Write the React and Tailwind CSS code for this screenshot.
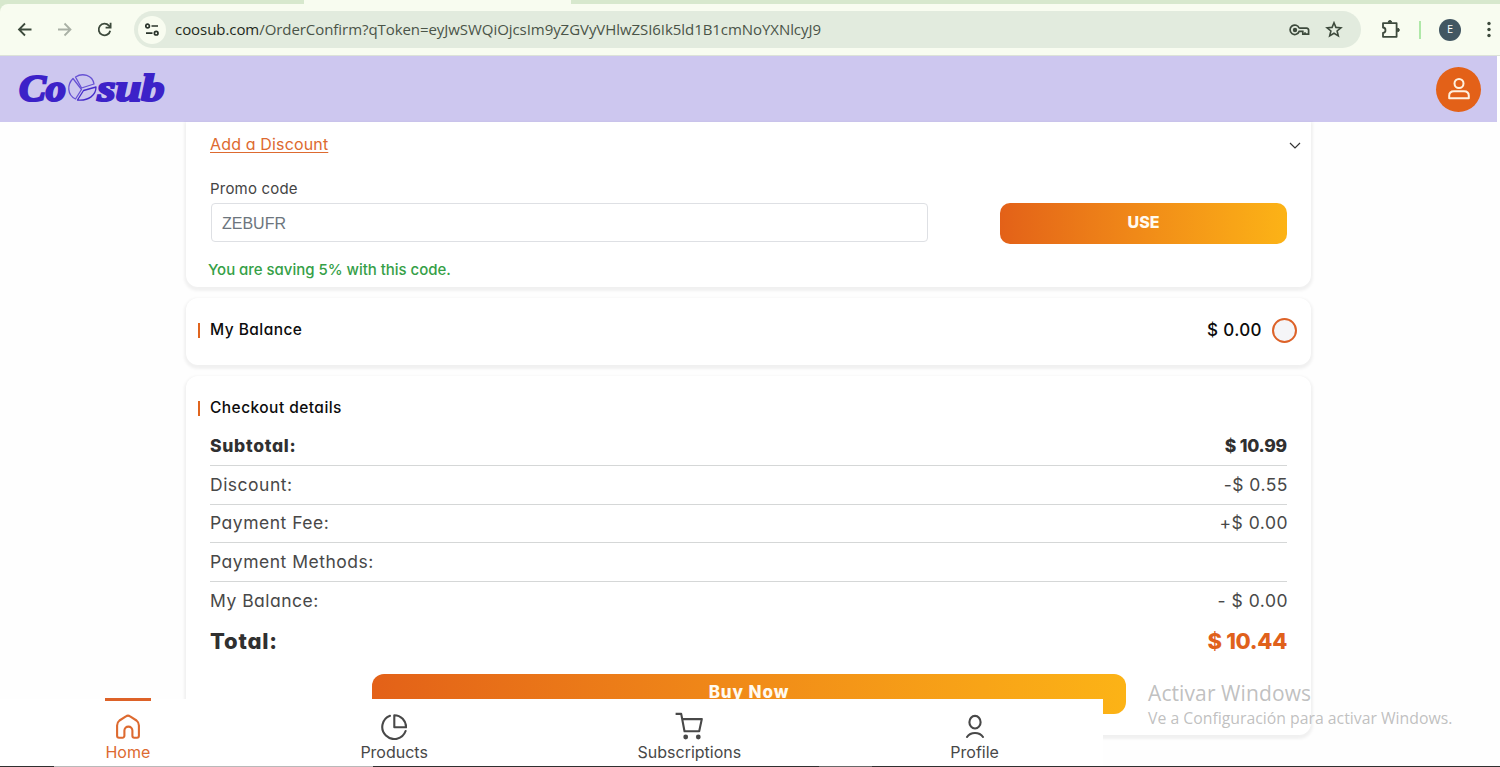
import React from "react";

const summaryRows = [
  { label: "Discount:", value: "-$ 0.55" },
  { label: "Payment Fee:", value: "+$ 0.00" },
  { label: "Payment Methods:", value: "" },
  { label: "My Balance:", value: "- $ 0.00" },
];

const HomeIcon = () => (
  <svg width="24" height="26" viewBox="0 0 24 26" fill="none" stroke="currentColor" strokeWidth="2.1" strokeLinejoin="round">
    <path d="M5.700 23.700H3A1.900 1.900 0 0 1 1.100 21.800V11.400c0-2.400.8-3.600 2.400-4.900l6.400-4.100a3.600 3.600 0 0 1 4.200 0l6.400 4.100c1.600 1.300 2.400 2.500 2.400 4.900v10.400a1.900 1.900 0 0 1-1.900 1.900h-2.700a1.900 1.900 0 0 1-1.900-1.900v-5.200a4 4 0 0 0-8 0v5.200a1.900 1.900 0 0 1-2.300 1.900z" />
  </svg>
);

const ProductsIcon = () => (
  <svg width="26" height="26" viewBox="0 0 26 26" fill="none" stroke="currentColor" strokeWidth="2.1" strokeLinecap="round">
    <path d="M9 1.800A12 12 0 1 0 24.600 17" />
    <path d="M13.300 1.200v12.100h11.800A12 12 0 0 0 13.300 1.200z" strokeLinejoin="round" />
  </svg>
);

const CartIcon = () => (
  <svg width="28" height="28" viewBox="0 0 28 28" fill="none" stroke="currentColor" strokeWidth="2.1" strokeLinejoin="round">
    <path d="M.6 1.900h5.600l3.300 17.400h14.700l2.600-12.200H7.200" />
    <circle cx="10.700" cy="25" r="2.400" fill="currentColor" stroke="none" />
    <circle cx="23.300" cy="25" r="2.400" fill="currentColor" stroke="none" />
  </svg>
);

const ProfileIcon = () => (
  <svg width="20" height="26" viewBox="0 0 20 26" fill="none" stroke="currentColor" strokeWidth="2.1" strokeLinecap="round">
    <ellipse cx="10" cy="8.200" rx="5.600" ry="6.300" />
    <path d="M2 23c3.600-5.300 12.400-5.300 16 0" />
  </svg>
);

const Logo = () => (
  <svg width="156" height="60" viewBox="0 0 156 60" fill="#3c22c8" fontFamily="'Liberation Serif', serif" fontWeight="700" fontStyle="italic" fontSize="38">
    <text x="1" y="41.800" textLength="47" lengthAdjust="spacingAndGlyphs" stroke="#3c22c8" strokeWidth="2.200">Co</text>
    <text x="79.500" y="41.800" textLength="67" lengthAdjust="spacingAndGlyphs" stroke="#3c22c8" strokeWidth="2.200">sub</text>
    <g fill="none" stroke="#6752d4" strokeWidth="1.300" strokeLinejoin="round">
      <path d="M55 19.500c-6 6-6 16.500 2.500 20.500l6-9.500z" />
      <path d="M57.500 18c7-4.500 17-2 18.500 7l-12.500 4z" />
      <path d="M65.500 31.500l12.500-3.500c0 8-7 14-18.500 13z" stroke="#452cca" />
    </g>
  </svg>
);

const BrowserBar = () => (
  <div className="h-14 shrink-0 bg-[#d7e8cd]">
    <div className="h-1 flex">
      <div className="ml-[304px] w-[267px] bg-[#f8fcf0]" />
    </div>
    <div className="h-[52px] flex items-center bg-[#f8fcf0] border-b border-[#dce2d8] rounded-tl-lg pl-[17px] text-[#3d4a3c]">
      <svg width="16" height="16" viewBox="0 0 16 16" fill="none" stroke="currentColor" strokeWidth="1.800">
        <path d="M14.500 7.500H2.500M8 1.500L2 7.500l6 6" />
      </svg>
      <svg className="ml-6 text-[#a9b0a5]" width="16" height="16" viewBox="0 0 16 16" fill="none" stroke="currentColor" strokeWidth="1.800">
        <path d="M1 7.500h12M7.500 1.500l6 6-6 6" />
      </svg>
      <svg className="ml-6" width="16" height="16" viewBox="0 0 16 16" fill="none" stroke="currentColor" strokeWidth="1.800">
        <path d="M13.200 8.700A5.800 5.800 0 1 1 11.900 3.700L13.400 5.500" />
        <path d="M13.600.7V5.700H8.600" />
      </svg>
      <div className="ml-[21px] w-[1227px] h-[37px] flex items-center rounded-full bg-[#e2ebde] pl-1">
        <div className="w-7 h-7 rounded-full bg-[#f8fcf0] flex items-center justify-center">
          <svg width="14" height="14" viewBox="0 0 14 14" fill="none" stroke="#29332a" strokeWidth="1.700">
            <circle cx="2.600" cy="3" r="1.800" />
            <path d="M6.500 3H13M1 10.200h6.500" />
            <circle cx="11.200" cy="10.200" r="1.800" />
          </svg>
        </div>
        <p className="ml-[9px] whitespace-nowrap text-[15px] tracking-[-0.06px] text-[#4a5448] font-['Open_Sans',sans-serif]">
          <span className="text-[#1f2a20]">coosub.com</span>
          /OrderConfirm?qToken=eyJwSWQiOjcsIm9yZGVyVHlwZSI6Ik5ld1B1cmNoYXNlcyJ9
        </p>
        <svg className="ml-auto" width="21" height="14" viewBox="0 0 21 14" fill="none" stroke="currentColor" strokeWidth="1.700">
          <path d="M10.200 5.200A4.700 4.700 0 1 0 10.200 8.400h3.600v2.700h2.200v-1.800M16 11.100h3.600V7.500a2 2 0 0 0-2-2.300H10.200" />
          <circle cx="6" cy="7" r="2.200" fill="currentColor" stroke="none" />
        </svg>
        <svg className="ml-[15px] mr-[18px]" width="18" height="18" viewBox="0 0 18 18" fill="none" stroke="currentColor" strokeWidth="1.600">
          <path d="M9 1.800l1.900 4.600 5 .4-3.800 3.200 1.200 4.900L9 12.300l-4.300 2.600 1.200-4.900-3.800-3.200 5-.4z" />
        </svg>
      </div>
      <svg className="ml-5" width="20" height="20" viewBox="0 0 20 20" fill="none" stroke="currentColor" strokeWidth="1.800" strokeLinejoin="round">
        <path d="M2 3.200h13.600v13.600H2v-4c3.300-.3 3.300-5 0-5.300z" />
        <path d="M7.200 2.200a1.700 1.700 0 0 1 3.400 0zM16.600 8.300a1.700 1.700 0 0 1 0 3.400z" fill="currentColor" strokeWidth="1" />
      </svg>
      <div className="ml-[18px] w-0.5 h-[18px] bg-[#afe8a8]" />
      <div className="ml-[18px] w-[22px] h-[22px] rounded-full bg-[#425762] text-white text-[11px] flex items-center justify-center font-['Open_Sans',sans-serif]">
        E
      </div>
      <svg className="ml-[25px]" width="6" height="18" viewBox="0 0 6 18" fill="currentColor">
        <circle cx="3" cy="2.500" r="1.700" />
        <circle cx="3" cy="8.500" r="1.700" />
        <circle cx="3" cy="14.500" r="1.700" />
      </svg>
    </div>
  </div>
);

const Header = () => (
  <header className="h-[66px] w-[1497px] shrink-0 flex items-center justify-between bg-[#cdc7ef] pl-[18px] pr-4">
    <Logo />
    <button className="w-[45px] h-[45px] rounded-full bg-[#e36118] flex items-center justify-center" aria-label="Account">
      <svg width="22" height="22" viewBox="0 0 22 22" fill="none" stroke="#fff1df" strokeWidth="2">
        <circle cx="11" cy="5.500" r="4.500" />
        <path d="M1.200 20.200v-2.500c0-3 2-4.500 4.800-4.500h10c2.800 0 4.800 1.500 4.800 4.500v2.500z" strokeLinejoin="round" />
      </svg>
    </button>
  </header>
);

const SectionTitle = ({ children }) => (
  <div className="flex items-center">
    <span className="w-0.5 h-[15px] bg-[#e0651f]" />
    <h2 className="ml-2.5 text-[15.5px] leading-[22px] font-medium tracking-[0.45px] text-[#0c0c0c]">{children}</h2>
  </div>
);

const DiscountCard = () => (
  <section className="h-[165px] rounded-b-xl bg-white px-6 shadow-[0_2px_3px_2px_rgba(0,0,0,0.055)]">
    <div className="h-11 flex items-center justify-between">
      <a className="text-base tracking-[0.15px] text-[#dd6a30] underline underline-offset-2">Add a Discount</a>
      <svg className="mr-[-14px] mt-1" width="12" height="8" viewBox="0 0 12 8" fill="none" stroke="#333" strokeWidth="1.200">
        <path d="M1 1l5 5 5-5" />
      </svg>
    </div>
    <label className="block mt-3 leading-[22px] text-[15px] tracking-[0.2px] text-[#444]">Promo code</label>
    <div className="mt-[3px] flex justify-between">
      <div className="ml-px w-[717px] h-[39px] flex items-center rounded border border-[#dee0e4] pl-2.5 pt-0.5 text-base text-[#6c757d] font-['Liberation_Sans',sans-serif]">
        ZEBUFR
      </div>
      <button className="w-[287px] h-[41px] rounded-[10px] bg-linear-to-r from-[#e36118] to-[#fcb316] pb-[3px] text-base font-extrabold text-[#fffaf0]">
        USE
      </button>
    </div>
    <p className="mt-[15px] -ml-0.5 leading-[22px] text-[15px] tracking-[-0.03px] font-medium text-[#35a047]">You are saving 5% with this code.</p>
  </section>
);

const BalanceCard = () => (
  <section className="mt-[11px] h-[67px] flex items-center justify-between rounded-xl bg-white pl-3 pr-3.5 pb-[3px] shadow-[0_2px_3px_2px_rgba(0,0,0,0.055)]">
    <SectionTitle>My Balance</SectionTitle>
    <div className="flex items-center">
      <span className="mt-0.5 text-[17px] font-medium tracking-[0.4px] text-[#0c0c0c]">$ 0.00</span>
      <span className="ml-2.5 w-[25px] h-[25px] rounded-full border-2 border-[#dd6228] bg-[#f5f5f7]" />
    </div>
  </section>
);

const CheckoutCard = () => (
  <section className="mt-[11px] h-[359px] rounded-xl bg-white pl-3 pr-6 pt-[21px] shadow-[0_2px_3px_2px_rgba(0,0,0,0.055)]">
    <SectionTitle>Checkout details</SectionTitle>
    <div className="pl-3 mt-2 text-[17.5px] text-[#484848]">
      <div className="h-[38.75px] flex items-center justify-between border-b border-[#d5d7d7] font-extrabold text-[#303030]">
        <span className="tracking-[0.7px]">Subtotal:</span>
        <span className="tracking-[-0.2px]">$ 10.99</span>
      </div>
      {summaryRows.map((row) => (
        <div key={row.label} className="h-[38.75px] flex items-center justify-between border-b border-[#d5d7d7] last:border-b-0 last:pb-px">
          <span className="tracking-[0.5px]">{row.label}</span>
          <span className="tracking-[0.5px] -mr-px">{row.value}</span>
        </div>
      ))}
    </div>
    <div className="pl-3 h-[41px] flex items-center justify-between text-[22px] font-extrabold text-[#303030]">
      <span className="tracking-[0.8px]">Total:</span>
      <span className="tracking-[-0.3px] text-[#e0611b]">$ 10.44</span>
    </div>
    <button className="block mt-3 ml-[174px] w-[754px] h-10 pb-0.5 rounded-xl bg-linear-to-r from-[#e36118] to-[#fcb316] text-[17px] font-extrabold tracking-[0.9px] text-[#fffaf0]">
      Buy Now
    </button>
  </section>
);

const NavItem = ({ icon, label, className }) => (
  <a className={`h-full flex flex-col items-center whitespace-nowrap text-base ${className}`}>
    <span className="h-[42px] flex items-end pb-px">{icon}</span>
    <span className="leading-[22px]">{label}</span>
  </a>
);

const BottomNav = () => (
  <nav className="absolute left-0 bottom-px w-[1103px] h-[67px] flex justify-around bg-white text-[#484848]">
    <div className="w-[46px] border-t-[3px] border-[#dd6228] -mt-px">
      <div className="-mt-0.5 h-[67px] flex justify-center">
        <NavItem icon={<HomeIcon />} label="Home" className="text-[#dd6a30]" />
      </div>
    </div>
    <NavItem icon={<ProductsIcon />} label="Products" className="w-[67px]" />
    <NavItem icon={<CartIcon />} label="Subscriptions" className="w-[104px]" />
    <NavItem icon={<ProfileIcon />} label="Profile" className="w-[47px]" />
  </nav>
);

const App = () => {
  return (
    <div className="relative w-[1500px] h-[767px] flex flex-col overflow-hidden bg-[#fefefe] font-[Inter,sans-serif] [font-feature-settings:'cv11']">
      <BrowserBar />
      <Header />
      <main className="w-[1125px] ml-[186px]">
        <DiscountCard />
        <BalanceCard />
        <CheckoutCard />
      </main>
      <BottomNav />

      {/* System watermark */}
      <div className="absolute left-[1148px] top-[679px] whitespace-nowrap text-[#b9b9b9]/90 font-['Open_Sans',sans-serif]">
        <p className="text-[21px] tracking-[0.1px] leading-7">Activar Windows</p>
        <p className="text-[15.8px] leading-[22px]">Ve a Configuración para activar Windows.</p>
      </div>

      {/* Taskbar edge */}
      <div className="absolute left-0 bottom-0 w-full h-px flex bg-[#303030]">
        <div className="ml-[54px] w-[319px] bg-[#b9b9b9]" />
        <div className="ml-[446px] w-[53px] bg-[#686868]" />
      </div>
    </div>
  );
};

export default App;
